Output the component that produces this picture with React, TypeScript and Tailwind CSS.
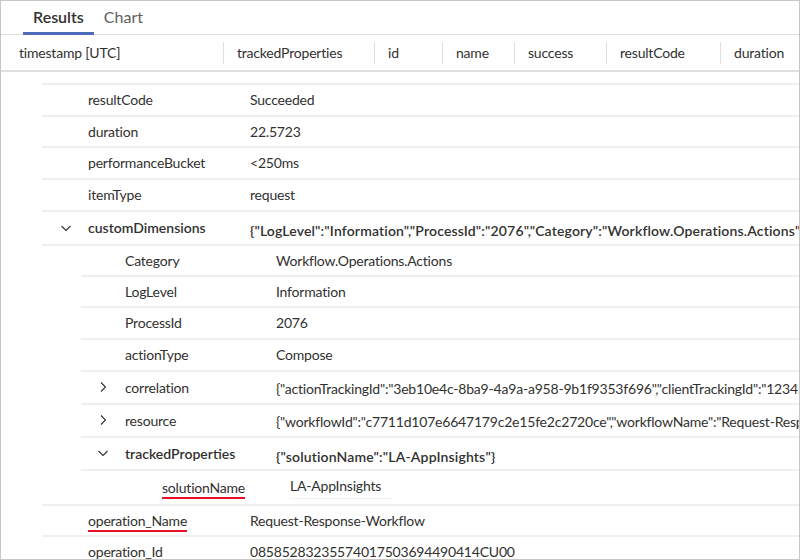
const font = { fontFamily: "Lato, 'Noto Sans', sans-serif" };

function ChevronDown() {
  return (
    <svg width="12" height="12" viewBox="0 0 12 12" fill="none">
      <path d="M1.5 4L6 8.5L10.5 4" stroke="#323130" strokeWidth="1.1" />
    </svg>
  );
}

function ChevronRight() {
  return (
    <svg width="12" height="12" viewBox="0 0 12 12" fill="none">
      <path d="M4 1.5L8.5 6L4 10.5" stroke="#323130" strokeWidth="1.1" />
    </svg>
  );
}

const columns = [
  { label: "timestamp [UTC]", w: "w-[222px]", pad: "pl-[18px]" },
  { label: "trackedProperties", w: "w-[151px]", pad: "pl-[13px]" },
  { label: "id", w: "w-[68px]", pad: "pl-[13px]" },
  { label: "name", w: "w-[72px]", pad: "pl-[13px]" },
  { label: "success", w: "w-[92px]", pad: "pl-[13px]" },
  { label: "resultCode", w: "w-[114px]", pad: "pl-[13px]" },
  { label: "duration", w: "w-[100px]", pad: "pl-[13px]" },
];

const topRows = [
  { k: "resultCode", v: "Succeeded", h: "h-[31.5px]" },
  { k: "duration", v: "22.5723", h: "h-[31.5px]" },
  { k: "performanceBucket", v: "<250ms", h: "h-[31.5px]" },
  { k: "itemType", v: "request", h: "h-[32px]" },
];

const subRows = [
  { k: "Category", v: "Workflow.Operations.Actions", h: "h-[31px]" },
  { k: "LogLevel", v: "Information", h: "h-[31.5px]" },
  { k: "ProcessId", v: "2076", h: "h-[31.5px]" },
  { k: "actionType", v: "Compose", h: "h-[32px]" },
];

const customJson =
  '{"LogLevel":"Information","ProcessId":"2076","Category":"Workflow.Operations.Actions","actionType":"Compose"}';
const correlationJson =
  '{"actionTrackingId":"3eb10e4c-8ba9-4a9a-a958-9b1f9353f696","clientTrackingId":"123456789"}';
const resourceJson =
  '{"workflowId":"c7711d107e6647179c2e15fe2c2720ce","workflowName":"Request-Response-Workflow","runId":"08585283235574017503694490414CU00"}';

export default function App() {
  return (
    <div
      className="w-[800px] h-[560px] overflow-hidden bg-white border border-[#c8c6c4] text-[14px] text-[#323130] tracking-[-0.2px]"
      style={font}
    >
      {/* Tabs */}
      <div className="flex h-[34px] border-b border-[#e1dfdd] pl-[22px] tracking-normal">
        <div className="flex items-center px-[10px] border-b-[3px] border-[#4f6bbd] text-[16px] font-semibold mb-[-1px] pt-[1px]">
          Results
        </div>
        <div className="flex items-center px-[8px] ml-[2px] text-[16px] text-[#605e5c] pb-[1px]">
          Chart
        </div>
      </div>

      {/* Column header */}
      <div className="flex items-center h-[37px] border-b-2 border-[#e1dfdd]">
        {columns.map((c, i) => (
          <div key={c.label} className={`flex items-center h-full shrink-0 ${c.w}`}>
            {i > 0 && <div className="w-px h-[22px] bg-[#e1dfdd]" />}
            <span className={c.pad}>{c.label}</span>
          </div>
        ))}
      </div>

      {/* Expanded details */}
      <div className="ml-[41px] mt-[11px] border-t-2 border-[#f0efee] whitespace-nowrap">
        {topRows.map((r) => (
          <div key={r.k} className={`flex items-center ${r.h} border-b-2 border-[#f0efee]`}>
            <div className="w-[208px] shrink-0 pl-[46px]">{r.k}</div>
            <div>{r.v}</div>
          </div>
        ))}

        <div className="border-b-2 border-[#f0efee]">
          <div className="flex items-center h-[34px] border-b-2 border-[#f0efee]">
            <div className="w-[208px] shrink-0 flex items-center">
              <span className="w-[46px] flex justify-center pl-[2px]">
                <ChevronDown />
              </span>
              <span className="font-semibold tracking-normal">customDimensions</span>
            </div>
            <div className="font-semibold tracking-[0.15px] pt-[6px]">{customJson}</div>
          </div>

          <div className="ml-[39px]">
            {subRows.map((r) => (
              <div key={r.k} className={`flex items-center ${r.h} border-b-2 border-[#f0efee]`}>
                <div className="w-[195px] shrink-0 pl-[44px]">{r.k}</div>
                <div>{r.v}</div>
              </div>
            ))}
            <div className="flex items-center h-[33px] border-b-2 border-[#f0efee]">
              <div className="w-[195px] shrink-0 flex items-center">
                <span className="w-[44px] flex justify-center pr-[1px]">
                  <ChevronRight />
                </span>
                correlation
              </div>
              <div className="pt-[2px]">{correlationJson}</div>
            </div>
            <div className="flex items-center h-[33px] border-b-2 border-[#f0efee]">
              <div className="w-[195px] shrink-0 flex items-center">
                <span className="w-[44px] flex justify-center pr-[1px]">
                  <ChevronRight />
                </span>
                resource
              </div>
              <div className="pt-[2px]">{resourceJson}</div>
            </div>
            <div className="flex items-center h-[33px] border-b-2 border-[#f0efee]">
              <div className="w-[195px] shrink-0 flex items-center">
                <span className="w-[44px] flex justify-center pr-[1px]">
                  <ChevronDown />
                </span>
                <span className="font-semibold tracking-normal">trackedProperties</span>
              </div>
              <div className="font-semibold tracking-[0.15px] pt-[6px]">
                {'{"solutionName":"LA-AppInsights"}'}
              </div>
            </div>
            <div className="flex items-center h-[33px]">
              <div className="w-[209px] shrink-0 pl-[81px]">
                <span className="border-b-2 border-[#e81123] pb-[1px]">solutionName</span>
              </div>
              <div className="border-b border-[#f3f2f1] pr-[12px] pb-[2px]">LA-AppInsights</div>
            </div>
          </div>
        </div>

        <div className="flex items-center h-[31px] border-b-2 border-[#f0efee]">
          <div className="w-[208px] shrink-0 pl-[46px]">
            <span className="border-b-2 border-[#e81123] pb-[1px]">operation_Name</span>
          </div>
          <div>Request-Response-Workflow</div>
        </div>
        <div className="flex items-center h-[32px] border-b-2 border-[#f0efee]">
          <div className="w-[208px] shrink-0 pl-[46px]">operation_Id</div>
          <div>08585283235574017503694490414CU00</div>
        </div>
      </div>
    </div>
  );
}
